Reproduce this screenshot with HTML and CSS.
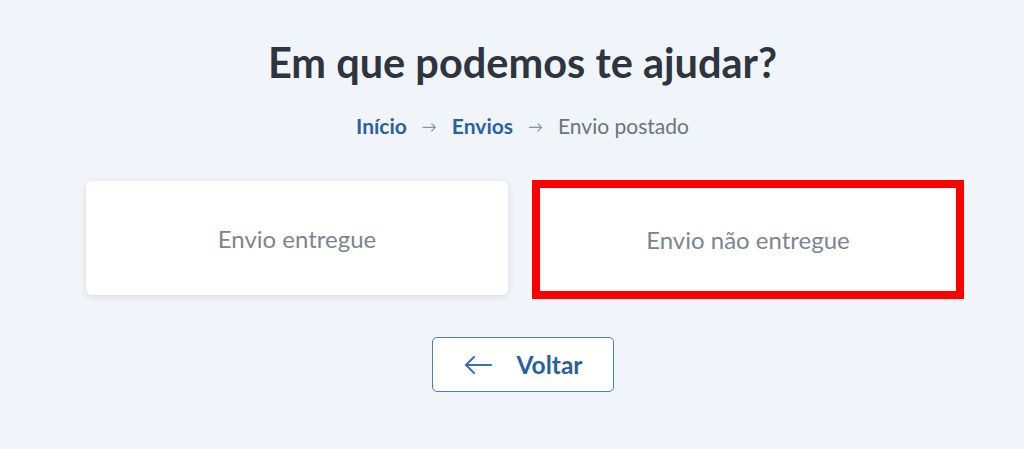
FILE: index.html
```html
<!DOCTYPE html>
<html lang="pt-BR">
<head>
    <meta charset="UTF-8">
    <title>Em que podemos te ajudar?</title>
    <link rel="stylesheet" href="styles.css">
</head>
<body>
    <div class="page">
        <h1 class="title">Em que podemos te ajudar?</h1>

        <nav class="breadcrumb">
            <a href="#">Início</a>
            <span class="sep">&rarr;</span>
            <a href="#">Envios</a>
            <span class="sep">&rarr;</span>
            <span class="current">Envio postado</span>
        </nav>

        <div class="options">
            <div class="option">Envio entregue</div>
            <div class="option option-selected">Envio não entregue</div>
        </div>

        <button class="back-btn">
            <svg width="30" height="20" viewBox="0 0 30 20" fill="none" stroke="currentColor" stroke-width="2" stroke-linecap="round" stroke-linejoin="round">
                <path d="M28 10H3"/>
                <path d="M11 2L3 10l8 8"/>
            </svg>
            <span>Voltar</span>
        </button>
    </div>
</body>
</html>
```

FILE: styles.css
```css
body {
    margin: 0;
    font-family: Lato, "Open Sans", sans-serif;
    background-color: #f1f4f8;
    color: #2d3540;
}
.page {
    display: flex;
    flex-direction: column;
    align-items: center;
    padding-left: 21px;
    padding-top: 38px;
}
.title {
    margin: 0;
    font-size: 41.5px;
    font-weight: 700;
    line-height: 48px;
    color: #2d3540;
}
.breadcrumb {
    margin-top: 27px;
    display: flex;
    align-items: center;
    gap: 13px;
    font-size: 21px;
    line-height: 26px;
}
.breadcrumb a {
    color: #2a62a0;
    font-weight: 700;
    text-decoration: none;
}
.breadcrumb .sep {
    color: #8b939c;
    font-size: 15px;
    margin: 0 2px;
}
.breadcrumb .current {
    color: #6c747d;
}
.options {
    margin-top: 42px;
    margin-left: 5px;
    display: grid;
    grid-template-columns: 422px 432px;
    gap: 24px;
    align-items: start;
}
.option {
    background-color: #fff;
    border-radius: 6px;
    box-shadow: 0 2px 6px rgba(40, 60, 90, 0.12);
    height: 114px;
    display: flex;
    align-items: center;
    justify-content: center;
    font-size: 24px;
    color: #7b858f;
}
.option-selected {
    border: 8px solid #f00;
    border-radius: 0;
    box-shadow: none;
    height: 103px;
    margin-top: -1px;
}
.back-btn {
    margin-top: 38px;
    width: 182px;
    height: 55px;
    background-color: #fff;
    border: 1px solid #4f7cae;
    border-radius: 5px;
    display: flex;
    align-items: center;
    justify-content: center;
    gap: 24px;
    color: #2a5f9e;
    font-family: inherit;
    font-size: 24.5px;
    font-weight: 700;
    cursor: pointer;
    padding: 0;
}
.back-btn svg {
    color: #3b6fae;
}
```
